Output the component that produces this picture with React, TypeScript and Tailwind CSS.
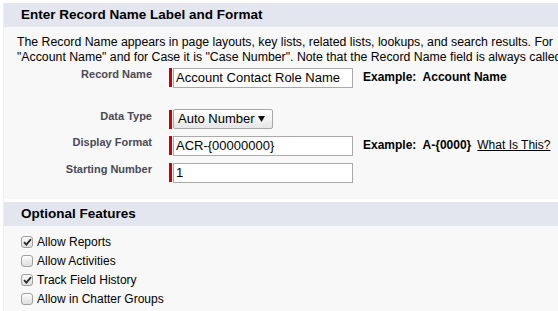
import React from "react";

const font = { fontFamily: '"Liberation Sans", Arial, sans-serif' };

function Check({ checked }: { checked: boolean }) {
  return (
    <span className="flex h-[12px] w-[12px] items-center justify-center rounded-[3px] border border-[#a0a0a0] bg-gradient-to-b from-[#fcfcfc] to-[#dedede]">
      {checked && (
        <svg width="9" height="8" viewBox="0 0 9 8">
          <path d="M1 4.2 L3.4 6.6 L8 1.2" fill="none" stroke="#2a2a2a" strokeWidth="1.8" />
        </svg>
      )}
    </span>
  );
}

function FieldRow({
  label,
  className,
  children,
  extra,
}: {
  label: string;
  className?: string;
  children: React.ReactNode;
  extra?: React.ReactNode;
}) {
  return (
    <div className={"flex h-[20px] " + (className ?? "")}>
      <div className="w-[148px] text-right text-[11px] font-bold leading-[14px] text-[#4a4a56]">
        {label}
      </div>
      <div className="ml-[17px] flex items-center">
        <span className="h-[19px] w-[3px] bg-[#c00]" />
        <div className="ml-[1px]">{children}</div>
        {extra}
      </div>
    </div>
  );
}

function TextBox({ value }: { value: string }) {
  return (
    <input
      readOnly
      value={value}
      className="h-[20px] w-[180px] border border-[#a9a9a9] bg-white px-[2px] text-[13px] text-black outline-none"
    />
  );
}

export default function App() {
  const features = [
    { label: "Allow Reports", checked: true },
    { label: "Allow Activities", checked: false },
    { label: "Track Field History", checked: true },
    { label: "Allow in Chatter Groups", checked: false },
  ];

  return (
    <div style={font} className="h-[311px] w-[558px] overflow-hidden bg-white pl-[3px] pt-[3px] text-black">
      <div className="flex flex-col border-l border-[#eceef2] bg-[#f8f8f8]">
        {/* Record name section */}
        <div className="flex h-[24px] items-center bg-[#e3e6ef] pl-[17px] text-[13.5px] font-bold">
          Enter Record Name Label and Format
        </div>
        <div className="pl-[13px] pt-[8px] text-[12.3px] leading-[15px] whitespace-nowrap">
          <div>
            The Record Name appears in page layouts, key lists, related lists, lookups, and search results. For
          </div>
          <div>
            "Account Name" and for Case it is "Case Number". Note that the Record Name field is always called
          </div>
        </div>

        <FieldRow
          label="Record Name"
          className="mt-[2px]"
          extra={
            <span className="ml-[10px] whitespace-nowrap text-[12px] font-bold">
              Example:&nbsp; Account Name
            </span>
          }
        >
          <TextBox value="Account Contact Role Name" />
        </FieldRow>

        <FieldRow label="Data Type" className="mt-[22px]">
          <div className="flex h-[20px] w-[100px] items-center justify-between rounded-[2px] border border-[#a8a8a8] bg-gradient-to-b from-white to-[#e6e6e6] pl-[4px] pr-[7px] text-[13px]">
            <span>Auto Number</span>
            <svg width="7" height="6" viewBox="0 0 7 6">
              <path d="M0 0 H7 L3.5 6 Z" fill="#111" />
            </svg>
          </div>
        </FieldRow>

        <FieldRow
          label="Display Format"
          className="mt-[6px]"
          extra={
            <span className="ml-[10px] whitespace-nowrap text-[12px]">
              <span className="font-bold">Example:&nbsp; A-{"{0000}"}</span>
              <a className="ml-[6px] underline">What Is This?</a>
            </span>
          }
        >
          <TextBox value="ACR-{00000000}" />
        </FieldRow>

        <FieldRow label="Starting Number" className="mt-[7px]">
          <TextBox value="1" />
        </FieldRow>

        <div className="h-[17px]" />

        {/* Optional features */}
        <div className="flex h-[27px] items-center border-t-[3px] border-white bg-[#e3e6ef] pl-[17px] text-[13.5px] font-bold">
          Optional Features
        </div>
        <div className="flex flex-col pb-[20px] pl-[17px] pt-[6px]">
          {features.map((f) => (
            <div key={f.label} className="flex h-[19px] items-center gap-[4px] text-[12px]">
              <Check checked={f.checked} />
              <span>{f.label}</span>
            </div>
          ))}
        </div>
      </div>
    </div>
  );
}
